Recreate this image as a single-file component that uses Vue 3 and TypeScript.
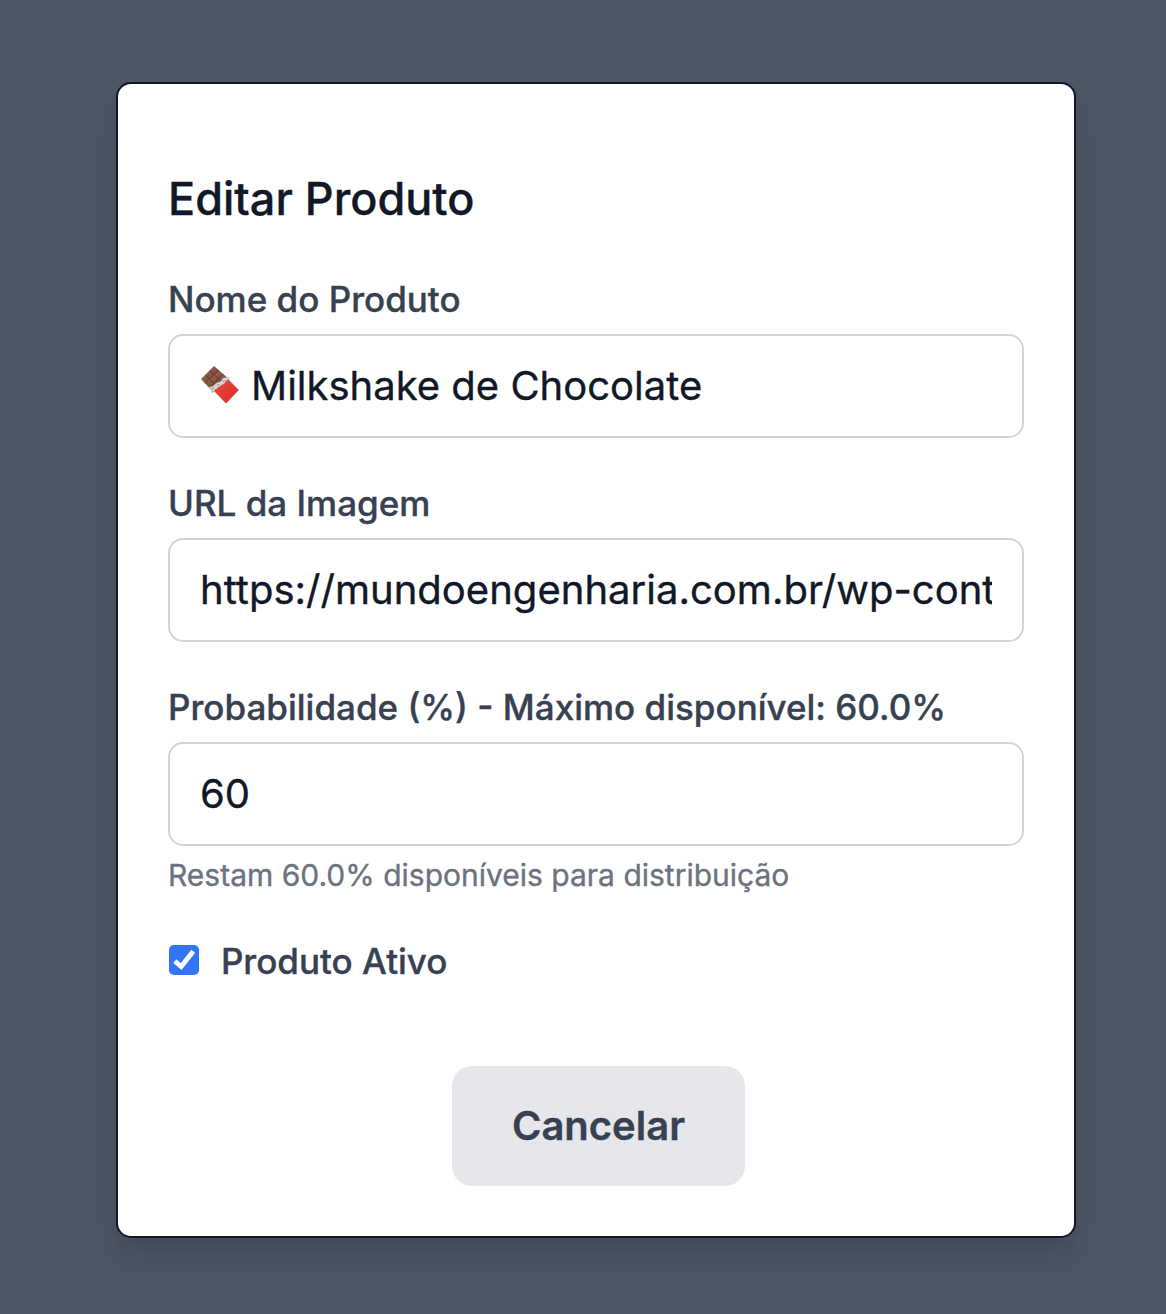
<script setup lang="ts">
import { ref } from 'vue'

const name = ref('Milkshake de Chocolate')
const imageUrl = ref('https://mundoengenharia.com.br/wp-content/uploads/milkshake.jpg')
const probability = ref('60')
const active = ref(true)
const available = '60.0%'
</script>

<template>
  <div class="overlay">
    <form class="card" @submit.prevent>
      <h3 class="title">Editar Produto</h3>

      <div class="field">
        <label class="label" for="name">Nome do Produto</label>
        <div class="control">
          <svg class="emoji" viewBox="0 0 40 40" aria-hidden="true">
            <defs>
              <linearGradient id="wrap" x1="0" y1="0" x2="1" y2="1">
                <stop offset="0" stop-color="#ed4a40" />
                <stop offset="0.7" stop-color="#dc3530" />
                <stop offset="1" stop-color="#c92722" />
              </linearGradient>
            </defs>
            <path d="M1 14 14 1 29 14 13 27Z" fill="#8b5745" />
            <path d="M5.3 18.4 18.3 5M9.6 22.8 23 9.2M5.4 9.8 19 23M9.7 5.4 24 18.6" stroke="#693d30" stroke-width="1.1" fill="none" />
            <path d="M2 14 14 2M6.4 18.2 18.8 6.2" stroke="#a36b57" stroke-width=".6" />
            <path d="M14 26 28 14 38.8 25 26 38.5Z" fill="url(#wrap)" />
            <path d="m9 22 4-1 3-3 4-1 3-4 6-1 .5 2-3.5 2-2 3-5 2-2 3-2 .5-2.5 4-1.5-2 .5-2-2.500-1Z" fill="#c3c3c3" />
            <path d="m11 23 4-2 3-3 3 0 3-4 4-1M13 26l3-4 4-1 3-4" stroke="#f0f0f0" stroke-width=".8" fill="none" />
            <path d="m12 22 2 2m3-5 2 1m3-5 2 2" stroke="#858585" stroke-width=".8" />
          </svg>
          <input id="name" v-model="name" class="input" type="text" />
        </div>
      </div>

      <div class="field">
        <label class="label" for="url">URL da Imagem</label>
        <div class="control">
          <input id="url" v-model="imageUrl" class="input" type="text" spellcheck="false" />
        </div>
      </div>

      <div class="field">
        <label class="label" for="probability">Probabilidade (%) - Máximo disponível: {{ available }}</label>
        <div class="control">
          <input id="probability" v-model="probability" class="input" type="text" inputmode="decimal" />
        </div>
        <p class="hint">Restam {{ available }} disponíveis para distribuição</p>
      </div>

      <label class="check">
        <input v-model="active" class="native" type="checkbox" />
        <span class="box" :class="{ on: active }">
          <svg v-if="active" viewBox="0 0 30 30" aria-hidden="true">
            <path d="M5.800 16.200 12.200 21.600 24.200 6.200" fill="none" stroke="#fff" stroke-width="4.800" />
          </svg>
        </span>
        <span>Produto Ativo</span>
      </label>

      <div class="actions">
        <button class="cancel" type="button">Cancelar</button>
      </div>
    </form>
  </div>
</template>

<style>
body {
  background: #4b5563;
}
</style>

<style scoped>
.overlay {
  box-sizing: border-box;
  height: 1314px;
  padding: 82px 90px 0 116px;
  overflow: hidden;
  background: #4b5563;
  font-family: Inter, "Liberation Sans", sans-serif;
  -webkit-text-stroke: 0.35px currentColor;
}
.card {
  box-sizing: border-box;
  width: 960px;
  height: 1156px;
  padding: 87px 50px 50px;
  border: 2px solid #111827;
  border-radius: 15px;
  background: #fff;
  box-shadow: 0 20px 30px -6px rgba(0, 0, 0, 0.1), 0 8px 12px -4px rgba(0, 0, 0, 0.05);
}
.title {
  margin: 0 0 48px;
  color: #111827;
  font-size: 45px;
  font-weight: 500;
  line-height: 55px;
}
.field {
  margin-bottom: 40px;
}
.label {
  display: block;
  margin-bottom: 10px;
  color: #374151;
  font-size: 35px;
  font-weight: 500;
  line-height: 50px;
}
.control {
  box-sizing: border-box;
  display: flex;
  align-items: center;
  height: 104px;
  padding: 0 30px;
  border: 2px solid #d1d5db;
  border-radius: 15px;
}
.emoji {
  flex: none;
  width: 40px;
  height: 40px;
  margin: 0 11px 2px 0;
}
.input {
  flex: 1;
  min-width: 0;
  height: 60px;
  padding: 0;
  border: 0;
  outline: 0;
  background: transparent;
  color: #111827;
  font: 400 40px/60px Inter, "Liberation Sans", sans-serif;
  -webkit-text-stroke: inherit;
}
#url {
  letter-spacing: 0.02px;
}
.hint {
  margin: 9px 0 41px;
  color: #6b7280;
  font-size: 30px;
  line-height: 40px;
}
.check {
  position: relative;
  display: flex;
  align-items: center;
  color: #374151;
  font-size: 35px;
  font-weight: 500;
  line-height: 50px;
}
.field:has(.hint) {
  margin-bottom: 0;
}
.native {
  position: absolute;
  opacity: 0;
}
.box {
  box-sizing: border-box;
  width: 30px;
  height: 30px;
  margin: 0 21.5px 2px 1.4px;
  border: 2px solid #767676;
  border-radius: 5px;
}
.box.on {
  border: 0;
  background: #3275f7;
}
.box svg {
  display: block;
}
.actions {
  display: flex;
  justify-content: center;
  margin-top: 80px;
  padding-left: 5px;
}
.cancel {
  height: 120px;
  padding: 0 60px;
  border: 0;
  border-radius: 20px;
  background: #e5e7eb;
  color: #374151;
  font: 600 40px/60px Inter, "Liberation Sans", sans-serif;
  -webkit-text-stroke: inherit;
}
</style>
